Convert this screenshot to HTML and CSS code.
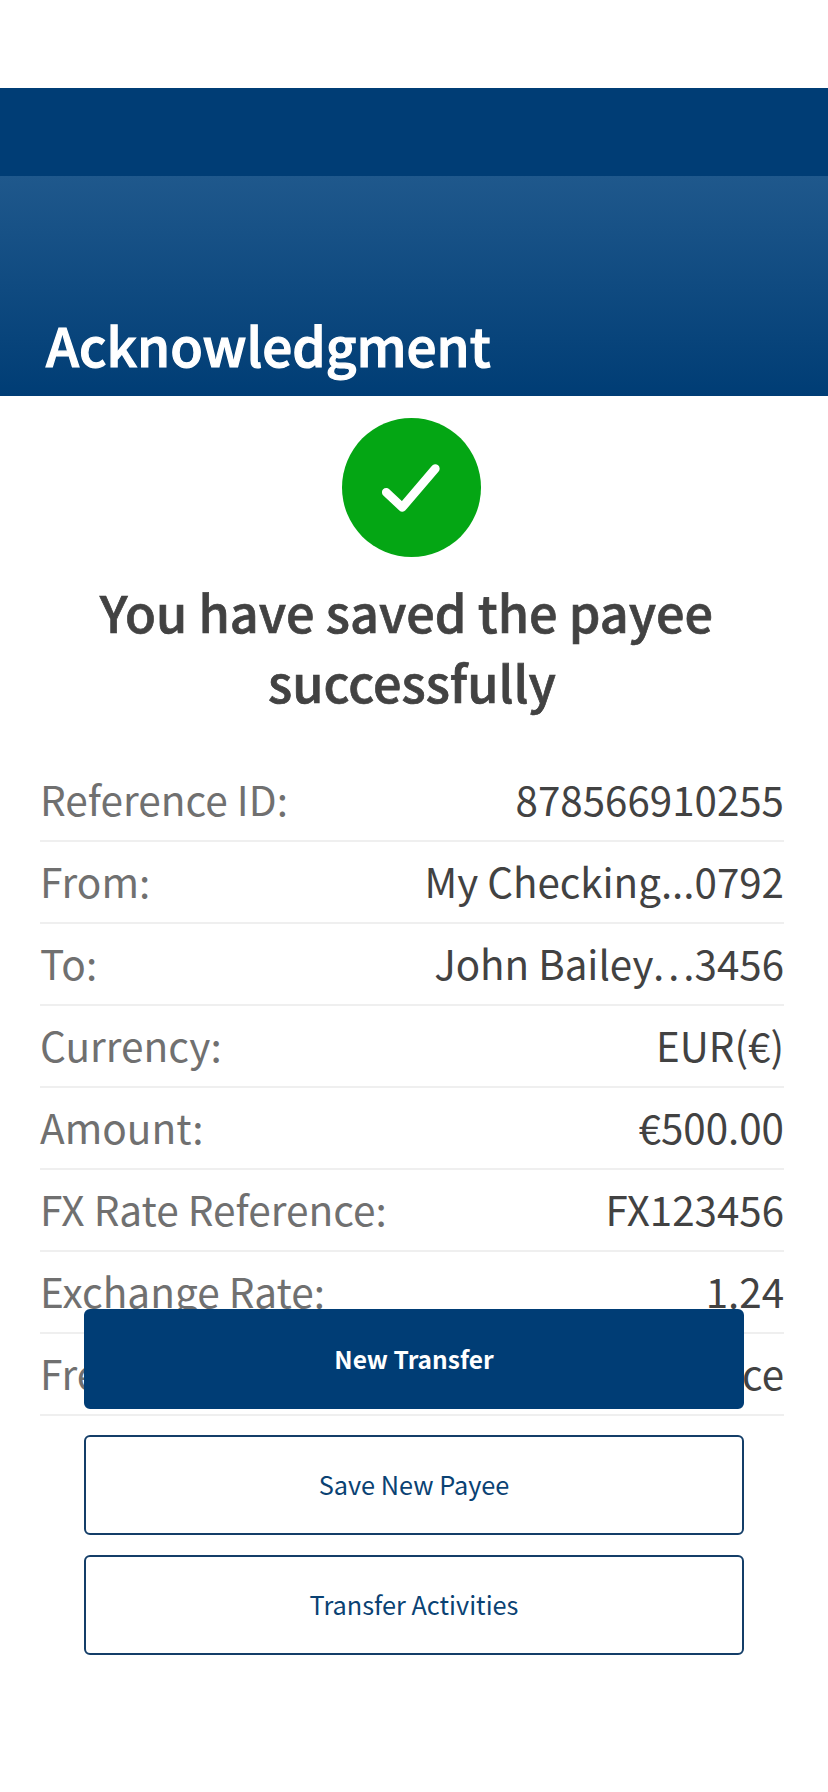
FILE: index.html
```html
<!DOCTYPE html>
<html lang="en">
<head>
<meta charset="utf-8">
<title>Acknowledgment</title>
<link rel="stylesheet" href="styles.css">
</head>
<body>
<header class="nav"></header>
<section class="banner"><h1 class="title">Acknowledgment</h1></section>
<main class="content">
<svg class="check" viewBox="0 0 139 139"><circle cx="69.5" cy="69.5" r="69.5" fill="#04a614"/><path d="M44.300 74.300L60.300 89.300L93.300 50.600" fill="none" stroke="#fff" stroke-width="8.700" stroke-linecap="round" stroke-linejoin="round"/></svg>
<h2 class="message">You have saved the payee&nbsp;<br>successfully</h2>
<dl class="details">
<div class="row"><dt>Reference ID:</dt><dd>878566910255</dd></div>
<div class="row"><dt>From:</dt><dd>My Checking...0792</dd></div>
<div class="row"><dt>To:</dt><dd>John Bailey…3456</dd></div>
<div class="row"><dt>Currency:</dt><dd>EUR(€)</dd></div>
<div class="row"><dt>Amount:</dt><dd>€500.00</dd></div>
<div class="row"><dt>FX Rate Reference:</dt><dd>FX123456</dd></div>
<div class="row"><dt>Exchange Rate:</dt><dd>1.24</dd></div>
<div class="row"><dt>Frequency:</dt><dd>Once</dd></div>
</dl>
</main>
<div class="actions">
<button class="btn primary">New Transfer</button>
<button class="btn">Save New Payee</button>
<button class="btn">Transfer Activities</button>
</div>
</body>
</html>
```
FILE: styles.css
```css
* { box-sizing: border-box; margin: 0; padding: 0; }
body { position: relative; width: 828px; height: 1792px; padding-top: 88px; overflow: hidden; background: #fff; font-family: "Noto Sans CJK SC", "Open Sans", sans-serif; }
.nav { height: 88px; background: #003d75; }
.banner { display: flex; align-items: flex-end; height: 220px; padding: 0 46px 14px; background: linear-gradient(#1f588c, #003d75); }
.title { color: #fff; font-size: 53.1px; font-weight: 500; line-height: 76px; -webkit-text-stroke: 1.2px #fff; }
.content { padding: 22px 44px 0 40px; }
.check { display: block; width: 139px; height: 139px; margin: 0 auto 0 302px; }
.message { margin-top: 20px; color: #424242; text-align: center; font-size: 50.4px; font-weight: 500; line-height: 70px; -webkit-text-stroke: 0.7px #424242; }
.details { margin-top: 43px; }
.row { display: flex; justify-content: space-between; height: 82px; border-bottom: 2px solid #efefef; line-height: 78px; }
.row dt { color: #707070; font-size: 40.6px; }
.row dd { color: #424242; font-size: 40.3px; }
.actions { position: absolute; left: 84px; top: 1309px; display: flex; flex-direction: column; gap: 20px; width: 660px; }
.btn { height: 100px; padding-bottom: 2px; border: 2px solid #143e68; border-radius: 6px; background: #fff; color: #0a4273; font-family: inherit; font-size: 25.3px; }
.primary { margin-bottom: 6px; border-color: #003d75; background: #003d75; color: #fff; font-size: 24.5px; font-weight: 700; }
```
